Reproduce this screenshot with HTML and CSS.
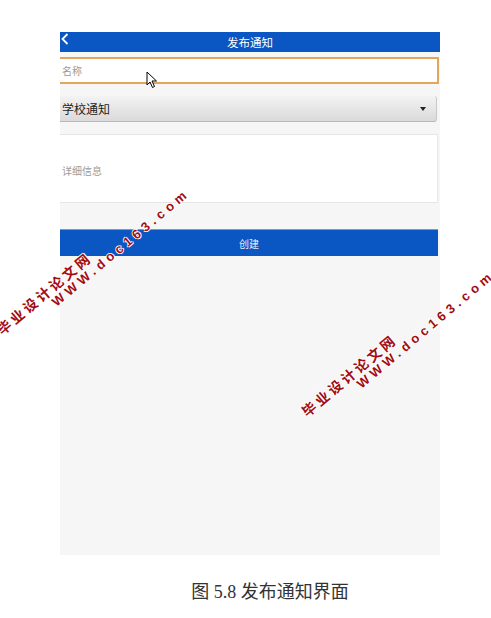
FILE: index.html
```html
<!DOCTYPE html>
<html lang="zh">
<head>
<meta charset="utf-8">
<link rel="stylesheet" href="styles.css">
</head>
<body>
<div class="page">
  <div class="panel">
    <div class="header">
      <svg class="back" width="8" height="12" viewBox="0 0 8 12"><path d="M6.5 1 L1.5 6 L6.5 11" fill="none" stroke="#fff" stroke-width="1.8"/></svg>
      <span class="title">发布通知</span>
    </div>
    <div class="input"><span class="ph">名称</span></div>
    <div class="select"><span class="sel-text">学校通知</span><span class="caret"></span></div>
    <div class="textarea"><span class="ph">详细信息</span></div>
    <div class="button">创建</div>
  </div>
  <div class="caption">图 5.8 发布通知界面</div>
</div>
<svg class="cursor" width="12" height="18" viewBox="0 0 12 18"><path d="M1 1 L1 14 L4 11 L6.5 16.5 L8.5 15.5 L6 10 L10.5 10 Z" fill="#fff" stroke="#000" stroke-width="1" stroke-linejoin="round"/></svg>
<span class="wm wm-en wm1a">WWW.doc163.com</span>
<span class="wm wm-cn wm1b">毕业设计论文网</span>
<span class="wm wm-en wm2a">WWW.doc163.com</span>
<span class="wm wm-cn wm2b">毕业设计论文网</span>
</body>
</html>
```
FILE: styles.css
```css
html, body {
  margin: 0;
  padding: 0;
  background: #fff;
}
body {
  width: 491px;
  height: 618px;
  overflow: hidden;
  position: relative;
  font-family: "Noto Sans CJK SC", "Noto Sans", sans-serif;
}
.page {
  padding: 32px 0 0 60px;
}
.panel {
  width: 380px;
  height: 523px;
  background: #f6f6f6;
  display: flex;
  flex-direction: column;
}
.header {
  height: 20px;
  background: #0a56c3;
  display: flex;
  align-items: center;
  justify-content: center;
  position: relative;
}
.back {
  position: absolute;
  left: 1px;
  top: 1px;
}
.title {
  color: #fff;
  font-size: 11.5px;
  line-height: 20px;
}
.input {
  margin-top: 5px;
  width: 379px;
  height: 27px;
  box-sizing: border-box;
  background: #fff;
  border: 2px solid #e3a45c;
  border-left: none;
  display: flex;
  align-items: center;
  padding-left: 2px;
}
.ph {
  color: #9a9a9a;
  font-size: 10px;
}
.select {
  margin-top: 12px;
  width: 377px;
  height: 26px;
  box-sizing: border-box;
  background: linear-gradient(#f3f3f3, #dadada);
  border-bottom: 1px solid #b9b9b9;
  border-right: 1px solid #c8c8c8;
  border-radius: 0 3px 3px 0;
  display: flex;
  align-items: center;
  justify-content: space-between;
  padding: 0 10px 0 2px;
}
.sel-text {
  color: #222;
  font-size: 12px;
}
.caret {
  width: 0;
  height: 0;
  border-left: 3.5px solid transparent;
  border-right: 3.5px solid transparent;
  border-top: 4px solid #222;
}
.textarea {
  margin-top: 12px;
  width: 378px;
  height: 69px;
  box-sizing: border-box;
  background: #fff;
  border: 1px solid #e6e6e6;
  border-left: none;
  display: flex;
  align-items: center;
  padding: 4px 0 0 2px;
}
.button {
  margin-top: 26px;
  width: 378px;
  height: 27px;
  background: #0a56c3;
  border-top: 1px solid #6f9bd8;
  box-sizing: border-box;
  color: #e8eefa;
  font-size: 10px;
  display: flex;
  align-items: center;
  justify-content: center;
}
.caption {
  width: 420px;
  margin-top: 25px;
  text-align: center;
  font-family: "Liberation Serif", "Noto Sans CJK SC", serif;
  font-size: 18px;
  line-height: 24px;
  color: #333;
}
.cursor {
  position: absolute;
  left: 146px;
  top: 71px;
}
.wm {
  position: absolute;
  color: #a30c12;
  font-family: "Liberation Sans", "Noto Sans CJK SC", sans-serif;
  font-weight: bold;
  line-height: 16px;
  white-space: nowrap;
  transform-origin: 0 50%;
  transform: rotate(-40deg);
  text-shadow: 1px 0 #fff, -1px 0 #fff, 0 1px #fff, 0 -1px #fff;
}
.wm-en {
  font-size: 13px;
  letter-spacing: 4.3px;
}
.wm-cn {
  font-size: 14px;
  letter-spacing: 3px;
}
.wm1a { left: 54px; top: 296px; }
.wm1b { left: -1px; top: 324px; }
.wm2a { left: 359px; top: 378px; }
.wm2b { left: 304px; top: 406px; }
```
